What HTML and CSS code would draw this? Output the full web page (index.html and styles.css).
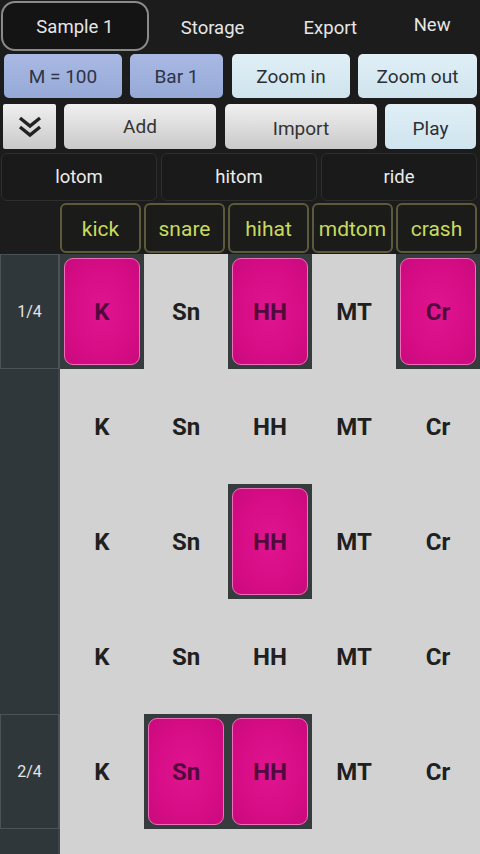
FILE: index.html
```html
<!DOCTYPE html>
<html>
<head>
<meta charset="utf-8">
<link rel="stylesheet" href="styles.css">
</head>
<body>
<div class="app">
  <div class="tabs">
    <div class="tab tab-sel">Sample 1</div>
    <div class="tab tab-storage">Storage</div>
    <div class="tab tab-export">Export</div>
    <div class="tab tab-new">New</div>
  </div>
  <div class="row2">
    <div class="btn blue w-m">M = 100</div>
    <div class="btn blue w-bar">Bar 1</div>
    <div class="btn pale w-zi">Zoom in</div>
    <div class="btn pale w-zo">Zoom out</div>
  </div>
  <div class="row3">
    <div class="btn grey w-chev">
      <svg width="28" height="26" viewBox="0 0 28 26"><path d="M4 4 L14 12 L24 4 M4 13 L14 21 L24 13" fill="none" stroke="#222" stroke-width="3.4" stroke-linejoin="miter"/></svg>
    </div>
    <div class="btn grey w-add">Add</div>
    <div class="btn grey w-imp">Import</div>
    <div class="btn pale w-play">Play</div>
  </div>
  <div class="row4">
    <div class="dark">lotom</div>
    <div class="dark">hitom</div>
    <div class="dark">ride</div>
  </div>
  <div class="row5">
    <div class="hdr">kick</div>
    <div class="hdr">snare</div>
    <div class="hdr">hihat</div>
    <div class="hdr">mdtom</div>
    <div class="hdr">crash</div>
  </div>
  <div class="grid">
    <div class="beat labeled">1/4</div>
    <div class="cell on"><span>K</span></div>
    <div class="cell">Sn</div>
    <div class="cell on"><span>HH</span></div>
    <div class="cell">MT</div>
    <div class="cell on"><span>Cr</span></div>

    <div class="beat"></div>
    <div class="cell">K</div>
    <div class="cell">Sn</div>
    <div class="cell">HH</div>
    <div class="cell">MT</div>
    <div class="cell">Cr</div>

    <div class="beat"></div>
    <div class="cell">K</div>
    <div class="cell">Sn</div>
    <div class="cell on"><span>HH</span></div>
    <div class="cell">MT</div>
    <div class="cell">Cr</div>

    <div class="beat"></div>
    <div class="cell">K</div>
    <div class="cell">Sn</div>
    <div class="cell">HH</div>
    <div class="cell">MT</div>
    <div class="cell">Cr</div>

    <div class="beat labeled">2/4</div>
    <div class="cell">K</div>
    <div class="cell on"><span>Sn</span></div>
    <div class="cell on"><span>HH</span></div>
    <div class="cell">MT</div>
    <div class="cell">Cr</div>

    <div class="beat"></div>
    <div class="cell"></div>
    <div class="cell"></div>
    <div class="cell"></div>
    <div class="cell"></div>
    <div class="cell"></div>
  </div>
</div>
</body>
</html>
```

FILE: styles.css
```css
html, body {
  margin: 0;
  padding: 0;
  background: #1c1c1c;
  font-family: Roboto, "Liberation Sans", sans-serif;
  width: 480px;
  height: 854px;
  overflow: hidden;
}
.app {
  width: 480px;
  height: 854px;
  overflow: hidden;
  display: flex;
  flex-direction: column;
}
.tabs {
  display: flex;
  height: 52px;
  flex-shrink: 0;
  align-items: stretch;
}
.tab {
  display: flex;
  align-items: center;
  justify-content: center;
  color: #e6e6e6;
  font-size: 18.5px;
}
.tab-sel {
  margin: 1px 0 1px 1px;
  width: 144px;
  border: 2px solid #8a8a88;
  border-radius: 14px;
  background: #141414;
  padding-top: 2px;
}
.tab-storage { width: 128px; padding-top: 4px; }
.tab-export { width: 108px; padding-top: 4px; }
.tab-new { width: 96px; padding-bottom: 2px; }

.row2 {
  display: flex;
  flex-shrink: 0;
  height: 44px;
  margin-top: 2px;
  padding-left: 4px;
  gap: 8px;
}
.btn {
  display: flex;
  align-items: center;
  justify-content: center;
  border-radius: 5px;
  font-size: 19px;
  box-sizing: border-box;
}
.blue {
  background: linear-gradient(#a9b9e4, #96a9d6);
  color: #2c3448;
}
.pale {
  background: linear-gradient(#e0eff6, #cfe4ee);
  color: #2b3036;
}
.grey {
  background: linear-gradient(#f0f0f0, #c9c9c9);
  color: #333;
}
.w-m { width: 118px; }
.w-bar { width: 93px; }
.w-zi { width: 118px; margin-left: 1px; }
.w-zo { width: 119px; }

.row3 {
  display: flex;
  flex-shrink: 0;
  height: 45px;
  margin-top: 6px;
  padding-left: 3px;
}
.w-chev { width: 53px; border-radius: 2px; }
.w-add { width: 152px; margin-left: 8px; }
.w-imp { width: 152px; margin-left: 9px; padding-top: 3px; }
.w-play { width: 91px; margin-left: 8px; padding-top: 4px; }

.row4 {
  display: flex;
  flex-shrink: 0;
  height: 48px;
  margin-top: 4px;
  padding-left: 1px;
  gap: 4px;
}
.dark {
  width: 156px;
  box-sizing: border-box;
  border: 1px solid #2e2e2e;
  border-radius: 6px;
  background: #1a1a1a;
  color: #ececec;
  font-size: 18.5px;
  display: flex;
  align-items: center;
  justify-content: center;
}
.row5 {
  display: flex;
  flex-shrink: 0;
  height: 50px;
  margin-top: 2px;
  padding-left: 60px;
  gap: 3px;
}
.hdr {
  width: 81px;
  box-sizing: border-box;
  border: 2px solid #5b5b3c;
  border-radius: 6px;
  background: #1b1b19;
  color: #c7db5e;
  font-size: 21px;
  display: flex;
  align-items: center;
  justify-content: center;
  padding-top: 2px;
}
.grid {
  display: grid;
  flex-shrink: 0;
  grid-template-columns: 60px repeat(5, 84px);
  grid-auto-rows: 115px;
  margin-top: 1px;
}
.beat {
  background: #30373a;
  border-right: 2px solid #3c4447;
  color: #e4e4e4;
  font-size: 16px;
  display: flex;
  align-items: center;
  justify-content: center;
  box-sizing: border-box;
}
.beat.labeled {
  border: 1px solid #4a5356;
  border-right: 2px solid #4a5356;
}
.cell {
  background: #d2d2d2;
  color: #202020;
  font-size: 24px;
  font-weight: bold;
  display: flex;
  align-items: center;
  justify-content: center;
}
.cell.on {
  background: #363c3e;
  padding: 4px;
  align-items: stretch;
  justify-content: stretch;
}
.cell.on span {
  flex: 1;
  border: 1px solid #f26cbd;
  border-radius: 9px;
  background: radial-gradient(ellipse at center, #e0148f 0%, #d40c84 70%, #c80a7c 100%);
  color: #520a3c;
  display: flex;
  align-items: center;
  justify-content: center;
}
```
